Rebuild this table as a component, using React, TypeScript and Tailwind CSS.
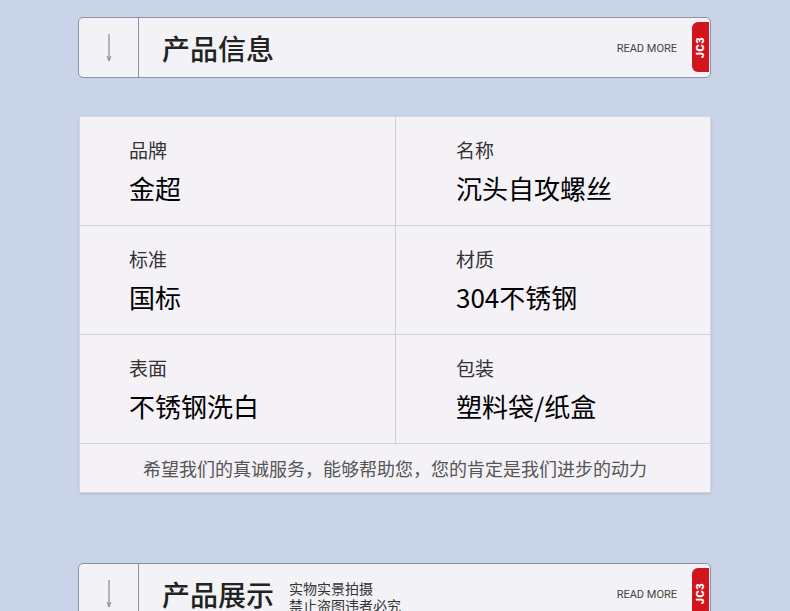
import React from "react";

const specs = [
    { label: "品牌", value: "金超" },
    { label: "名称", value: "沉头自攻螺丝" },
    { label: "标准", value: "国标" },
    { label: "材质", value: "304不锈钢" },
    { label: "表面", value: "不锈钢洗白" },
    { label: "包装", value: "塑料袋/纸盒" },
];

function SectionHeader({ title, sub }: { title: string; sub?: string[] }) {
    return (
        <div className="relative ml-[78px] flex h-[61px] w-[633px] shrink-0 rounded-[5px] border border-[#8e929c] bg-[#f3f2f6]">
            <div className="flex w-[60px] items-center justify-center border-r border-[#8e929c]">
                <svg width="10" height="28" viewBox="0 0 10 28" fill="none">
                    <line x1="5" y1="0" x2="5" y2="27" stroke="#8a8a8f" strokeWidth="1.2" />
                    <path d="M3 22 L5 27 L7 22" stroke="#8a8a8f" strokeWidth="1" fill="none" />
                </svg>
            </div>
            <div className="flex flex-1 items-center pl-[23px]">
                <span className="text-[28px] leading-none font-medium text-[#222]">{title}</span>
                {sub && (
                    <div className="ml-[15px] mt-[6px] flex flex-col text-[14px] leading-[17px] text-[#333]">
                        {sub.map((s) => (
                            <span key={s}>{s}</span>
                        ))}
                    </div>
                )}
            </div>
            <span className="mr-[33px] mt-[3px] self-center font-['Roboto',sans-serif] text-[11px] text-[#444]">
                READ MORE
            </span>
            {/* red tab */}
            <div className="absolute right-[1px] top-[4px] flex h-[50px] w-[17px] items-center justify-center rounded-l-[6px] bg-[#d2141d]">
                <span className="-rotate-90 font-['Roboto',sans-serif] text-[11px] font-black leading-none tracking-[0.5px] text-white">
                    JC3
                </span>
            </div>
        </div>
    );
}

export default function App() {
    return (
        <div className="flex h-[611px] w-[790px] flex-col overflow-hidden bg-[#c9d4e8] pt-[17px] font-['Noto_Sans_CJK_SC',sans-serif]">
            <SectionHeader title="产品信息" />

            {/* spec table */}
            <div className="ml-[79px] mt-[38px] w-[632px] shrink-0 border border-[#d8d6de] bg-[#f4f1f7] shadow-sm">
                <div className="grid grid-cols-[316px_1fr]">
                    {specs.map((s, i) => (
                        <div
                            key={s.label}
                            className={`h-[109px] border-b border-[#d2d0d8] ${
                                i % 2 === 0 ? "border-r pl-[49px]" : "pl-[60px]"
                            }`}
                        >
                            <div className="pt-[21px] text-[19px] leading-[24px] text-[#333]">{s.label}</div>
                            <div className="mt-[10px] text-[26px] leading-[32px] text-black">{s.value}</div>
                        </div>
                    ))}
                </div>
                <div className="flex h-[48px] items-center justify-center text-[18px] text-[#555]">
                    希望我们的真诚服务，能够帮助您，您的肯定是我们进步的动力
                </div>
            </div>

            <div className="mt-[70px]">
                <SectionHeader title="产品展示" sub={["实物实景拍摄", "禁止盗图违者必究"]} />
            </div>
        </div>
    );
}
